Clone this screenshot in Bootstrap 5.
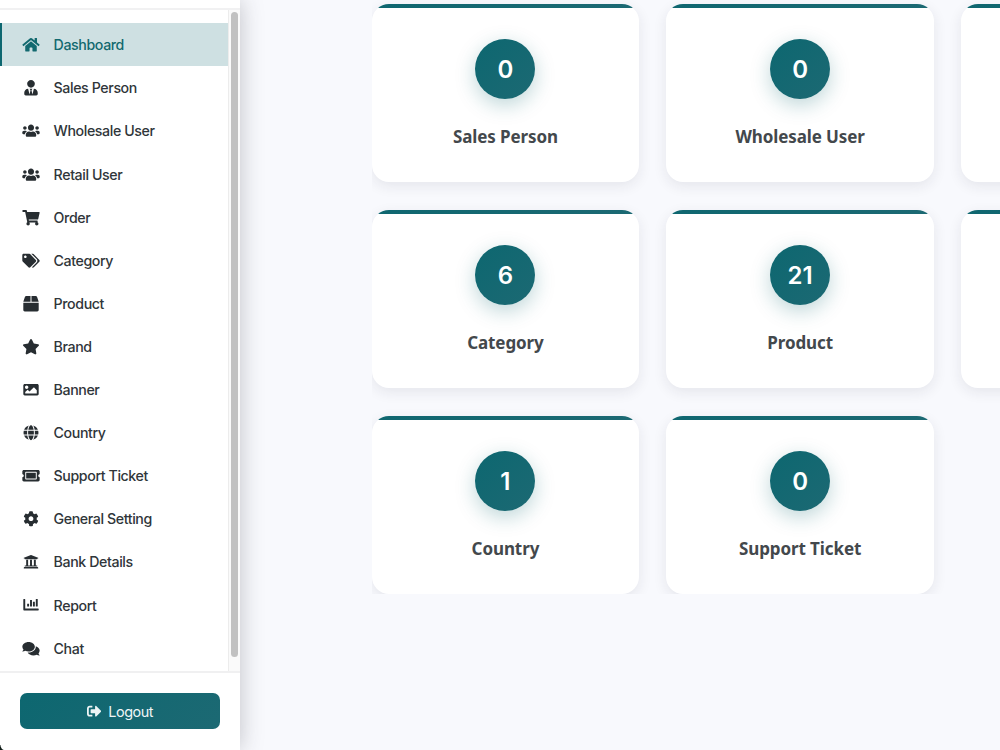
<!DOCTYPE html>
<html lang="en">
<head>
<meta charset="utf-8">
<meta name="viewport" content="width=device-width, initial-scale=1">
<title>Dashboard</title>
<link href="https://cdn.jsdelivr.net/npm/bootstrap@5.3.0/dist/css/bootstrap.min.css" rel="stylesheet">
<style>
body{background:#f8f9fd;font-family:Inter,"Liberation Sans",sans-serif;color:#272d31}
.sidebar{width:240.4px;background:#fff;box-shadow:0 0 22px rgba(45,45,50,.27);z-index:2}
.brand-strip{height:10px;border-bottom:2px solid #f1f1f2}
.menu-area{height:661px}
.side-menu{padding-top:13.4px}
.side-menu .nav-link{height:43.1px;padding:0 0 0 18px;border-left:2px solid transparent;color:#30363a;font-size:14.2px;letter-spacing:-.4px;font-weight:450}
.side-menu .nav-link.active{background:#cee0e2;border-left-color:#0d6770;color:#12696f}
.side-menu svg{width:22px;height:15.4px;padding:0 2.3px;margin-right:11.6px;overflow:visible;color:#272d31}
.side-menu .active svg{color:#12696f}
.track{width:12.4px;background:#fafafa;border-left:1px solid #ececec;padding:2px 2px 0 2.4px}
.thumb{width:7px;height:645px;background:#c1c1c1;border-radius:4px}
.side-foot{border-top:2px solid #f0f0f1;padding:20px 20.4px 0 20px}
.btn-logout{height:36px;background:linear-gradient(135deg,#0d6770,#1c6973);color:#eef5f6;font-size:14.4px;border-radius:7px;letter-spacing:-.45px;border:0;padding-top:7px}
.btn-logout:hover{color:#fff}
.btn-logout svg{width:14.4px;height:14.4px;margin-right:7px}
.content{margin-left:131.4px;height:594px;padding-top:4px}
.stat-grid{display:grid;grid-template-columns:repeat(3,267.3px);gap:28px 27.4px}
.stat-card{height:178px;border:0;border-radius:17px;box-shadow:0 4px 14px rgba(30,35,50,.09)}
.stat-inner{border-radius:17px;padding-top:31px}
.stat-bar{height:4px;background:linear-gradient(90deg,#0f6770,#1c6973)}
.stat-num{width:60px;height:60px;background:linear-gradient(135deg,#0d6770,#1c6973);color:#fff;font-size:24px;font-weight:580;box-shadow:0 6px 20px rgba(16,105,112,.27);padding-top:2px}
.stat-title{font:bold 17px/24px "Noto Sans","DejaVu Sans",sans-serif;color:#43484c;margin-top:26px;letter-spacing:-.1px}
.window-corner{left:0;bottom:0;width:6px;height:5px;background:radial-gradient(circle at 100% 0,transparent 5px,#111d19 6px);z-index:3}
</style>
</head>
<body class="vh-100 overflow-hidden">
<div class="d-flex vh-100">
  <aside class="sidebar d-flex flex-column flex-shrink-0 position-relative">
    <div class="brand-strip"></div>
    <div class="menu-area d-flex">
      <nav class="side-menu nav flex-column flex-nowrap flex-grow-1" id="menu"></nav>
      <div class="track"><div class="thumb"></div></div>
    </div>
    <div class="side-foot flex-grow-1">
      <a href="#" class="btn btn-logout w-100 d-flex align-items-center justify-content-center"><svg viewBox="0 0 512 512" fill="currentColor"><path d="M497 273L329 441c-15 15-41 4.500-41-17v-96H152c-13.300 0-24-10.700-24-24v-96c0-13.300 10.700-24 24-24h136V88c0-21.400 25.900-32 41-17l168 168c9.300 9.400 9.300 24.600 0 34zM192 436v-40c0-6.600-5.400-12-12-12H96c-17.700 0-32-14.300-32-32V160c0-17.700 14.300-32 32-32h84c6.600 0 12-5.400 12-12V76c0-6.600-5.400-12-12-12H96c-53 0-96 43-96 96v192c0 53 43 96 96 96h84c6.600 0 12-5.400 12-12z"/></svg>Logout</a>
    </div>
    <div class="window-corner position-absolute"></div>
  </aside>
  <main class="content flex-grow-1 overflow-hidden"><div class="stat-grid" id="stats"></div></main>
</div>
<script>
const items = [
 ["Dashboard",576,"M280.37 148.26L96 300.11V464a16 16 0 0 0 16 16l112.06-.29a16 16 0 0 0 15.92-16V368a16 16 0 0 1 16-16h64a16 16 0 0 1 16 16v95.64a16 16 0 0 0 16 16.05L464 480a16 16 0 0 0 16-16V300L295.67 148.26a12.19 12.19 0 0 0-15.3 0zM571.6 251.47L488 182.56V44.05a12 12 0 0 0-12-12h-56a12 12 0 0 0-12 12v72.61L318.47 43a48 48 0 0 0-61 0L4.34 251.47a12 12 0 0 0-1.6 16.9l25.5 31A12 12 0 0 0 45.15 301l235.22-193.74a12.19 12.19 0 0 1 15.3 0L530.9 301a12 12 0 0 0 16.9-1.6l25.5-31a12 12 0 0 0-1.7-16.93z"],
 ["Sales Person",448,"M224 256c70.7 0 128-57.3 128-128S294.7 0 224 0 96 57.3 96 128s57.3 128 128 128zm95.8 32.6L272 480l-32-136 32-56h-96l32 56-32 136-47.8-191.4C56.9 292 0 350.3 0 422.4V464c0 26.5 21.5 48 48 48h352c26.5 0 48-21.5 48-48v-41.6c0-72.1-56.9-130.4-128.2-133.8z"],
 ["Wholesale User",640,"M96 224c35.3 0 64-28.7 64-64s-28.7-64-64-64-64 28.7-64 64 28.7 64 64 64zm448 0c35.3 0 64-28.7 64-64s-28.7-64-64-64-64 28.7-64 64 28.7 64 64 64zm32 32h-64c-17.6 0-33.5 7.1-45.1 18.6 40.3 22.1 68.9 62 75.1 109.4h66c17.7 0 32-14.3 32-32v-32c0-35.3-28.7-64-64-64zm-256 0c61.9 0 112-50.1 112-112S381.9 32 320 32 208 82.1 208 144s50.1 112 112 112zm76.8 32h-8.3c-20.8 10-43.9 16-68.5 16s-47.6-6-68.5-16h-8.3C179.6 288 128 339.6 128 403.2V432c0 26.5 21.5 48 48 48h288c26.5 0 48-21.5 48-48v-28.8c0-63.6-51.6-115.2-115.2-115.2zm-223.7-13.4C161.5 263.1 145.6 256 128 256H64c-35.3 0-64 28.7-64 64v32c0 17.7 14.3 32 32 32h65.9c6.3-47.4 34.9-87.3 75.2-109.4z"],
 ["Retail User",640,null],
 ["Order",576,"M528.12 301.319l47.273-208C578.806 78.301 567.391 64 551.99 64H159.208l-9.166-44.81C147.758 8.021 137.93 0 126.529 0H24C10.745 0 0 10.745 0 24v16c0 13.255 10.745 24 24 24h69.883l70.248 343.435C147.325 417.1 136 435.222 136 456c0 30.928 25.072 56 56 56s56-25.072 56-56c0-15.674-6.447-29.835-16.824-40h209.647C430.447 426.165 424 440.326 424 456c0 30.928 25.072 56 56 56s56-25.072 56-56c0-22.172-12.888-41.332-31.579-50.405l5.517-24.276c3.413-15.018-8.002-29.319-23.403-29.319H218.117l-6.545-32h293.145c11.206 0 20.92-7.754 23.403-18.681z"],
 ["Category",640,"M497.941 225.941L286.059 14.059A48 48 0 0 0 252.118 0H48C21.49 0 0 21.49 0 48v204.118a48 48 0 0 0 14.059 33.941l211.882 211.882c18.744 18.745 49.136 18.746 67.882 0l204.118-204.118c18.745-18.745 18.745-49.137 0-67.882zM112 160c-26.51 0-48-21.49-48-48s21.49-48 48-48 48 21.49 48 48-21.49 48-48 48zm513.941 133.823L421.823 497.941c-18.745 18.745-49.137 18.745-67.882 0l-.36-.36L527.64 323.522c16.999-16.999 26.36-39.6 26.36-63.64s-9.362-46.641-26.36-63.64L331.397 0h48.721a48 48 0 0 1 33.941 14.059l211.882 211.882c18.745 18.745 18.745 49.137 0 67.882z"],
 ["Product",512,"M509.5 184.6L458.9 32.8C452.4 13.2 434.1 0 413.4 0H272v192h238.7c-.4-2.5-.4-5-1.2-7.4zM240 0H98.6c-20.7 0-39 13.2-45.5 32.8L2.5 184.6c-.8 2.4-.8 4.9-1.2 7.4H240V0zM0 224v240c0 26.5 21.5 48 48 48h416c26.5 0 48-21.5 48-48V224H0z"],
 ["Brand",576,"M259.3 17.8L194 150.2 47.9 171.5c-26.2 3.8-36.7 36.1-17.7 54.6l105.7 103-25 145.5c-4.5 26.3 23.2 46 46.4 33.7L288 439.6l130.7 68.7c23.2 12.2 50.9-7.4 46.4-33.7l-25-145.5 105.7-103c19-18.5 8.5-50.8-17.7-54.6L382 150.2 316.7 17.8c-11.7-23.6-45.6-23.9-57.4 0z"],
 ["Banner",512,"M464 448H48c-26.51 0-48-21.49-48-48V112c0-26.51 21.49-48 48-48h416c26.51 0 48 21.49 48 48v288c0 26.51-21.49 48-48 48zM112 120c-30.928 0-56 25.072-56 56s25.072 56 56 56 56-25.072 56-56-25.072-56-56-56zM64 384h384V272l-87.515-87.515c-4.686-4.686-12.284-4.686-16.971 0L208 320l-55.515-55.515c-4.686-4.686-12.284-4.686-16.971 0L64 336v48z"],
 ["Country",496,"M336.5 160C322 70.7 287.8 8 248 8s-74 62.7-88.5 152h177zM152 256c0 22.2 1.2 43.5 3.3 64h185.3c2.1-20.5 3.3-41.8 3.3-64s-1.2-43.5-3.3-64H155.3c-2.1 20.5-3.3 41.8-3.3 64zm324.7-96c-28.6-67.9-86.5-120.4-158-141.6 24.4 33.8 41.2 84.7 50 141.6h108zM177.2 18.4C105.8 39.6 47.8 92.1 19.3 160h108c8.7-56.9 25.5-107.8 49.9-141.6zM487.4 192H372.7c2.1 21 3.3 42.5 3.3 64s-1.2 43-3.3 64h114.6c5.5-20.5 8.6-41.8 8.6-64s-3.1-43.5-8.5-64zM120 256c0-21.5 1.2-43 3.3-64H8.6C3.2 212.5 0 233.8 0 256s3.2 43.5 8.6 64h114.6c-2-21-3.2-42.5-3.2-64zm39.5 96c14.5 89.3 48.7 152 88.5 152s74-62.7 88.5-152h-177zm159.3 141.6c71.4-21.2 129.4-73.7 158-141.6h-108c-8.8 56.9-25.6 107.8-50 141.6zM19.3 352c28.6 67.9 86.5 120.4 158 141.6-24.4-33.8-41.2-84.7-50-141.6h-108z"],
 ["Support Ticket",576,"M128 160h320v192H128V160zm400 96c0 26.51 21.49 48 48 48v96c0 26.51-21.49 48-48 48H48c-26.51 0-48-21.49-48-48v-96c26.51 0 48-21.49 48-48s-21.49-48-48-48v-96c0-26.51 21.49-48 48-48h480c26.51 0 48 21.49 48 48v96c-26.51 0-48 21.49-48 48zm-48-104c0-13.255-10.745-24-24-24H120c-13.255 0-24 10.745-24 24v208c0 13.255 10.745 24 24 24h336c13.255 0 24-10.745 24-24V152z"],
 ["General Setting",512,"M487.4 315.7l-42.6-24.6c4.3-23.2 4.3-47 0-70.2l42.6-24.6c4.9-2.8 7.1-8.6 5.5-14-11.1-35.6-30-67.8-54.7-94.6-3.8-4.1-10-5.1-14.8-2.3L380.8 110c-17.9-15.4-38.5-27.3-60.8-35.1V25.8c0-5.6-3.9-10.5-9.4-11.7-36.7-8.2-74.3-7.8-109.2 0-5.5 1.2-9.4 6.1-9.4 11.7V75c-22.2 7.9-42.8 19.8-60.8 35.1L88.7 85.5c-4.9-2.8-11-1.9-14.8 2.3-24.7 26.7-43.6 58.9-54.7 94.6-1.7 5.4.6 11.2 5.5 14L67.3 221c-4.3 23.2-4.3 47 0 70.2l-42.6 24.6c-4.9 2.8-7.1 8.6-5.5 14 11.1 35.6 30 67.8 54.7 94.6 3.8 4.1 10 5.1 14.8 2.3l42.6-24.6c17.9 15.4 38.5 27.3 60.8 35.1v49.2c0 5.6 3.9 10.5 9.4 11.7 36.7 8.2 74.3 7.8 109.2 0 5.5-1.2 9.4-6.1 9.4-11.7v-49.2c22.2-7.9 42.8-19.8 60.8-35.1l42.6 24.6c4.9 2.8 11 1.9 14.8-2.3 24.7-26.7 43.6-58.9 54.7-94.6 1.5-5.5-.7-11.3-5.6-14.1zM256 336c-44.1 0-80-35.9-80-80s35.9-80 80-80 80 35.9 80 80-35.9 80-80 80z"],
 ["Bank Details",512,"M496 128v16a8 8 0 0 1-8 8h-24v12c0 6.627-5.373 12-12 12H60c-6.627 0-12-5.373-12-12v-12H24a8 8 0 0 1-8-8v-16a8 8 0 0 1 4.941-7.392l232-88a7.996 7.996 0 0 1 6.118 0l232 88A8 8 0 0 1 496 128zm-24 304H40c-13.255 0-24 10.745-24 24v16a8 8 0 0 0 8 8h464a8 8 0 0 0 8-8v-16c0-13.255-10.745-24-24-24zM96 192v192H60c-6.627 0-12 5.373-12 12v20h416v-20c0-6.627-5.373-12-12-12h-36V192h-64v192h-64V192h-64v192h-64V192H96z"],
 ["Report",512,"M332.8 320h38.4c6.4 0 12.8-6.4 12.8-12.8V172.8c0-6.4-6.4-12.8-12.8-12.8h-38.4c-6.4 0-12.8 6.4-12.8 12.8v134.4c0 6.4 6.4 12.8 12.8 12.8zm96 0h38.4c6.4 0 12.8-6.4 12.8-12.8V76.8c0-6.4-6.4-12.8-12.8-12.8h-38.4c-6.4 0-12.8 6.4-12.8 12.8v230.4c0 6.4 6.4 12.8 12.8 12.8zm-288 0h38.4c6.4 0 12.8-6.4 12.8-12.8v-70.4c0-6.4-6.4-12.8-12.8-12.8h-38.4c-6.4 0-12.8 6.4-12.8 12.8v70.4c0 6.4 6.4 12.8 12.8 12.8zm96 0h38.4c6.4 0 12.8-6.4 12.8-12.8V108.8c0-6.4-6.4-12.8-12.8-12.8h-38.4c-6.4 0-12.8 6.4-12.8 12.8v198.4c0 6.4 6.4 12.8 12.8 12.8zM496 384H64V80c0-8.84-7.16-16-16-16H16C7.16 64 0 71.16 0 80v336c0 17.67 14.33 32 32 32h464c8.84 0 16-7.16 16-16v-32c0-8.84-7.16-16-16-16z"],
 ["Chat",576,"M416 192c0-88.4-93.1-160-208-160S0 103.6 0 192c0 34.3 14.1 65.9 38 92-13.4 30.2-35.5 54.2-35.8 54.5-2.2 2.3-2.8 5.7-1.5 8.7S4.8 352 8 352c36.6 0 66.9-12.3 88.7-25 32.2 15.7 70.3 25 111.3 25 114.9 0 208-71.6 208-160zm122 220c23.9-26 38-57.7 38-92 0-66.9-53.5-124.2-129.3-148.1.9 6.6 1.3 13.3 1.3 20.1 0 105.9-107.7 192-240 192-10.800 0-21.300-.8-31.700-1.900C207.800 439.600 281.800 480 368 480c41 0 79.100-9.200 111.300-25 21.800 12.700 52.100 25 88.700 25 3.200 0 6.100-1.900 7.300-4.800 1.300-2.900.7-6.300-1.500-8.700-.3-.3-22.400-24.200-35.800-54.500z"]
];
items[3][2] = items[2][2];
document.getElementById("menu").innerHTML = items.map(([label, w, d], i) =>
  `<a href="#" class="nav-link d-flex align-items-center${i ? "" : " active"}"><svg viewBox="0 0 ${w} 512" fill="currentColor"><path d="${d}"/></svg><span>${label}</span></a>`).join("");
const stats = [["0","Sales Person"],["0","Wholesale User"],["",""],["6","Category"],["21","Product"],["",""],["1","Country"],["0","Support Ticket"]];
document.getElementById("stats").innerHTML = stats.map(([n, t]) =>
  `<div class="card stat-card"><div class="overflow-hidden stat-inner pt-0 h-100"><div class="stat-bar"></div><div class="stat-inner d-flex flex-column align-items-center">${t ? `<div class="stat-num rounded-circle d-flex align-items-center justify-content-center">${n}</div><div class="stat-title">${t}</div>` : ""}</div></div></div>`).join("");
</script>
<script src="https://cdn.jsdelivr.net/npm/bootstrap@5.3.0/dist/js/bootstrap.bundle.min.js"></script>
</body>
</html>
